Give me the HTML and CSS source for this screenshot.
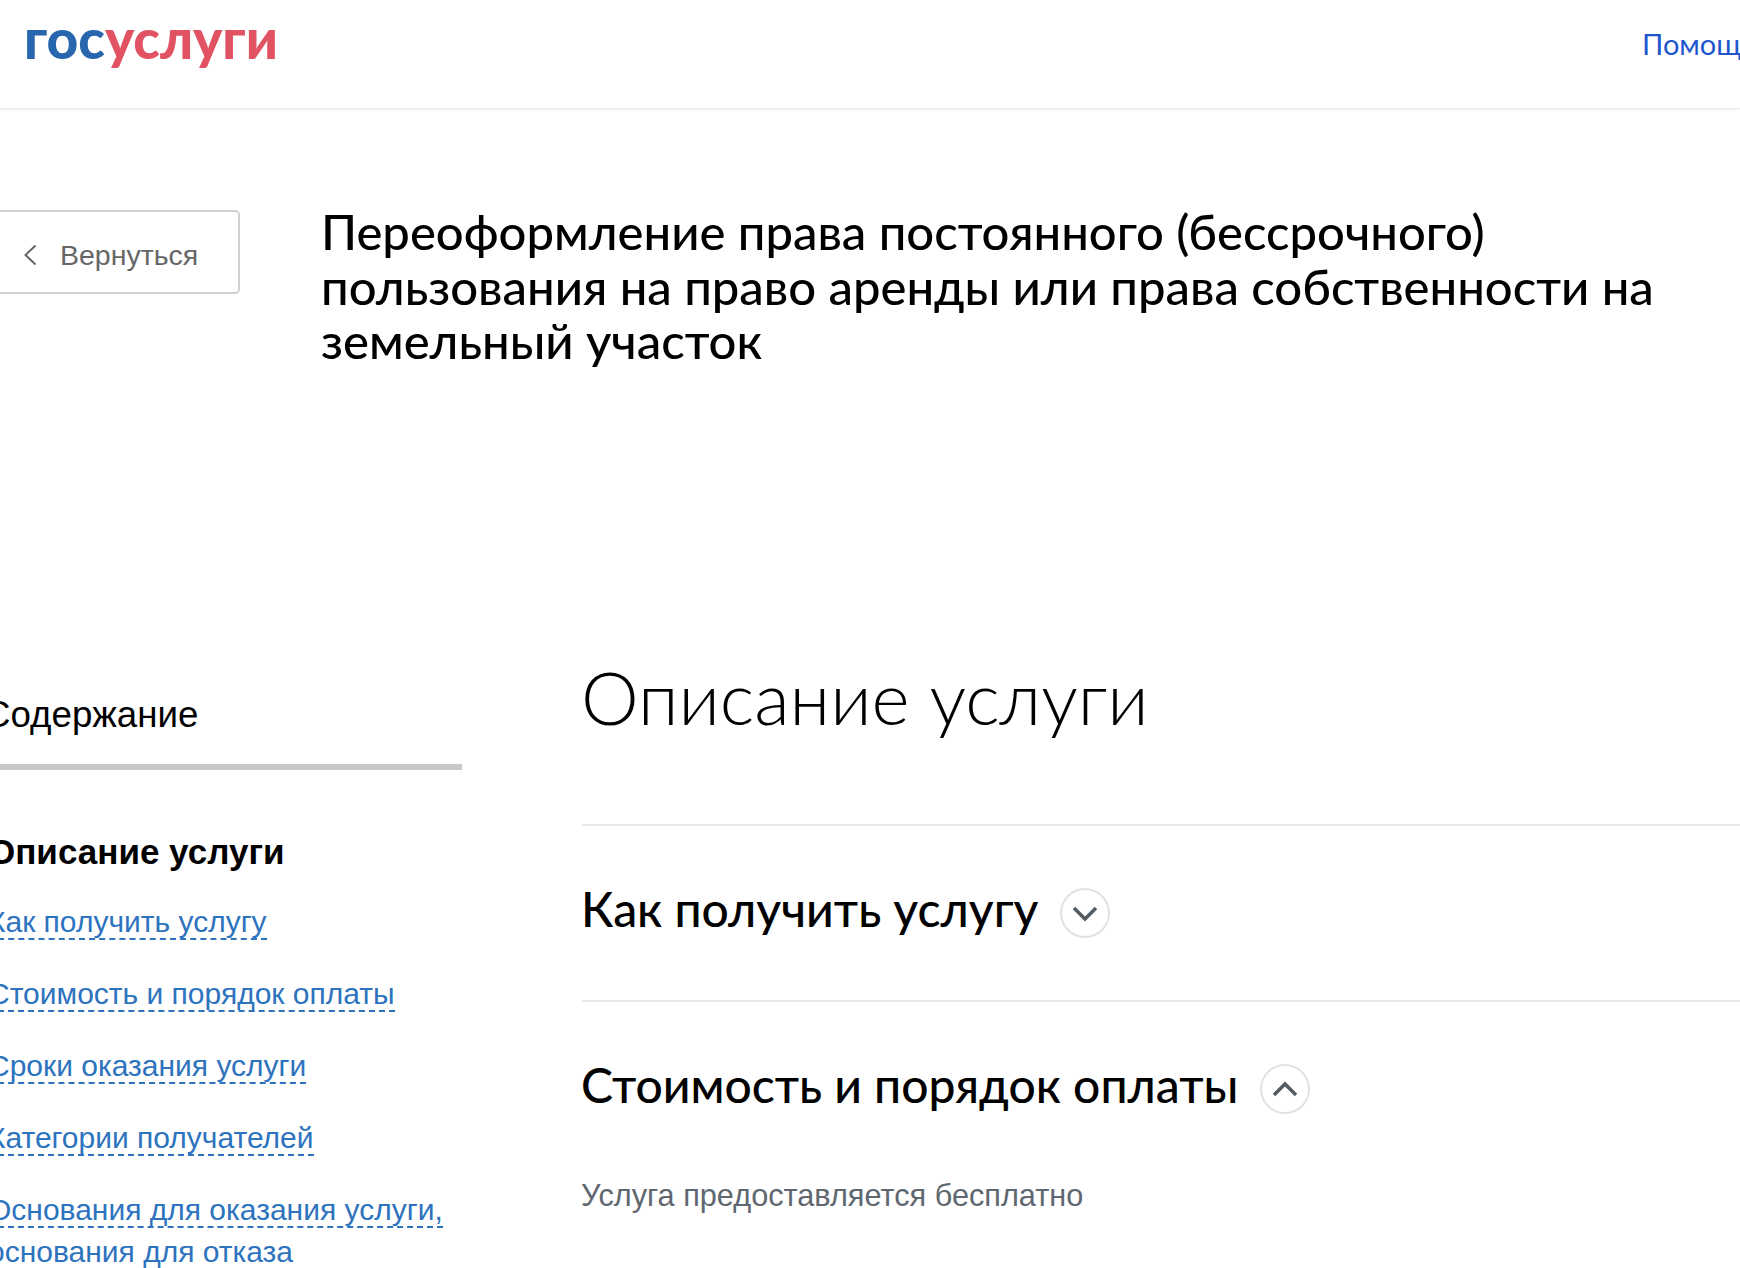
FILE: index.html
```html
<!DOCTYPE html>
<html lang="ru">
<head>
<meta charset="utf-8">
<title>Госуслуги</title>
<link rel="stylesheet" href="styles.css">
</head>
<body>
<header class="topbar">
  <a class="logo"><span class="logo-blue">гос</span><span class="logo-red">услуги</span></a>
  <a class="help">Помощь</a>
</header>
<section class="intro">
  <a class="back">
    <svg class="back-icon" viewBox="0 0 14 22" width="14" height="22"><path d="M12.5 1.5 2.5 11l10 9.500" fill="none" stroke="#666" stroke-width="2"/></svg>
    <span class="back-label">Вернуться</span>
  </a>
  <h1 class="title">Переоформление права постоянного (бессрочного) пользования на право аренды или права собственности на земельный участок</h1>
</section>
<div class="content">
  <aside class="toc">
    <div class="toc-head">Содержание</div>
    <div class="toc-current">Описание услуги</div>
    <ul class="toc-list">
      <li><a>Как получить услугу</a></li>
      <li><a>Стоимость и порядок оплаты</a></li>
      <li><a>Сроки оказания услуги</a></li>
      <li><a>Категории получателей</a></li>
      <li><a>Основания для оказания услуги, основания для отказа</a></li>
    </ul>
  </aside>
  <main class="main">
    <h2 class="section-title">Описание услуги</h2>
    <div class="acc">
      <h3 class="acc-title">Как получить услугу</h3>
      <span class="circle"><svg viewBox="0 0 28 18" width="28" height="18"><path d="M3 4 14 15 25 4" fill="none" stroke="#535b63" stroke-width="3.500"/></svg></span>
    </div>
    <div class="acc acc-open">
      <h3 class="acc-title">Стоимость и порядок оплаты</h3>
      <span class="circle"><svg viewBox="0 0 28 18" width="28" height="18"><path d="M3 15 14 4 25 15" fill="none" stroke="#535b63" stroke-width="3.500"/></svg></span>
    </div>
    <p class="acc-text">Услуга предоставляется бесплатно</p>
  </main>
</div>
</body>
</html>
```
FILE: styles.css
```css
* { box-sizing: border-box; }
html, body { margin: 0; padding: 0; height: 1268px; overflow: hidden; background: #fff; }
body { width: 1740px; color: #000; font-family: "Liberation Sans", sans-serif; }
ul { list-style: none; margin: 0; padding: 0; }
h1, h2, h3, p { margin: 0; font-weight: normal; }

.topbar { height: 109px; display: flex; justify-content: space-between; padding: 0 0 0 24px; border-bottom: 1px solid #eceded; box-shadow: 0 1px 3px rgba(0,0,0,.06); overflow: hidden; }
.logo { font: 900 55px/1 "Lato", sans-serif; padding-top: 11px; height: 70px; }
.logo-blue { color: #2866ad; }
.logo-red { color: #e15263; }
.help { font: 29px/1 "Lato", sans-serif; color: #1f57cf; padding-top: 29px; width: 98px; white-space: nowrap; overflow: hidden; flex: none; }

.intro { display: flex; align-items: flex-start; margin-left: -30px; padding-top: 101px; height: 544px; }
.back { flex: none; width: 270px; height: 84px; margin-right: 82px; border: 2px solid #ccd1d6; border-radius: 5px; display: flex; align-items: center; padding-left: 51px; gap: 23px; font-size: 28.5px; color: #666; }
.back-icon { margin-top: 6px; }
.back-label { padding-top: 6px; }
.title { font: 500 49px/54.5px "Lato", sans-serif; width: 1400px; margin-top: -6px; margin-left: -1px; }

.content { display: flex; align-items: flex-start; }
.toc { flex: none; width: 474px; margin-left: -12px; margin-right: 120px; }
.toc-head { font-size: 36.7px; text-indent: -4px; line-height: 38px; padding-top: 43px; padding-bottom: 30px; border-bottom: 6px solid #c8c8cc; margin-bottom: 63px; }
.toc-current { font-size: 35px; font-weight: 700; line-height: 38px; margin-bottom: 30px; }
.toc-list { width: 464px; font-size: 30px; line-height: 42px; color: #2d73be; }
.toc-list li { margin-bottom: 30px; }
.toc-list a { border-bottom: 2px dashed #2d73be; }

.main { flex: 1; min-width: 0; }
.section-title { font: 300 73px/88px "Lato", sans-serif; height: 171px; margin-left: -1px; }
.acc { border-top: 2px solid #e5e7e9; height: 176px; display: flex; align-items: center; gap: 22px; }
.acc-title { font: 500 48px/56px "Lato", sans-serif; margin-bottom: 8px; margin-left: -1px; }
.circle { width: 50px; height: 50px; border-radius: 50%; border: 2px solid #dfe3e8; display: flex; align-items: center; justify-content: center; flex: none; }
.acc-text { font-size: 30.7px; line-height: 36px; color: #5f6770; margin-top: 2px; margin-left: -1px; }
```
